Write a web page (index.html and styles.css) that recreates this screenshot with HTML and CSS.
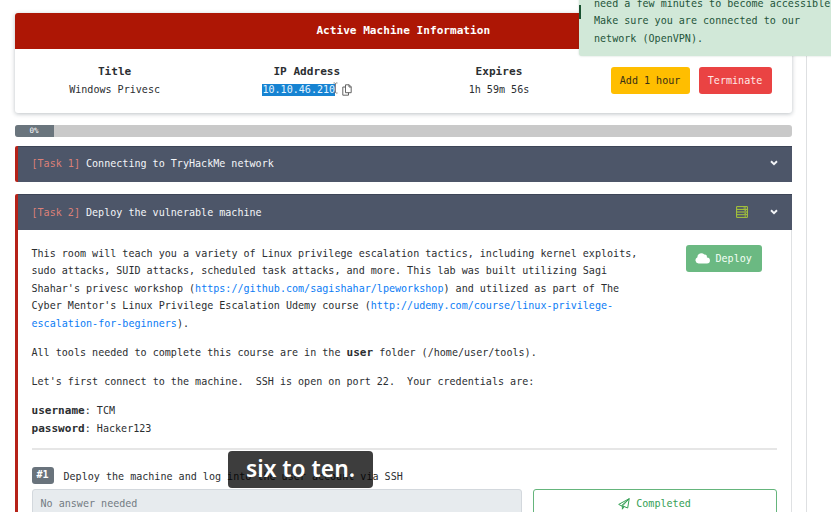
FILE: index.html
```html
<!DOCTYPE html>
<html lang="en">
<head>
<meta charset="utf-8">
<title>Windows Privesc</title>
<link rel="stylesheet" href="styles.css">
</head>
<body>
<div class="screen">
  <main class="room">
    <section class="machine">
      <h2 class="machine-head">Active Machine Information</h2>
      <div class="machine-body">
        <div class="info"><b>Title</b><span>Windows Privesc</span></div>
        <div class="info"><b>IP Address</b><span class="ip-row"><mark>10.10.46.210</mark><svg class="ibeam" viewBox="0 0 5 12"><path d="M.5 1h1.2l.8.7.8-.7h1.2M2.5 1.5v9M.5 11h1.2l.8-.7.8.7h1.2"/></svg><svg class="copy" viewBox="0 0 10 12"><path d="M3.5.8h3.700l2 2v5.900H3.500zM7 .8V3h2.200M3.500 3H.8v8.200h5.700V8.700"/></svg></span></div>
        <div class="info"><b>Expires</b><span>1h 59m 56s</span></div>
        <div class="actions"><button class="btn add">Add 1 hour</button><button class="btn stop">Terminate</button></div>
      </div>
    </section>
    <div class="progress"><div class="bar">0%</div></div>
    <section class="task">
      <header class="task-head"><span class="num">[Task 1]</span><span>Connecting to TryHackMe network</span>
        <svg class="chev" viewBox="0 0 8 6"><path d="M1 1.300 4 4.200 7 1.300"/></svg></header>
    </section>
    <section class="task open">
      <header class="task-head"><span class="num">[Task 2]</span><span>Deploy the vulnerable machine</span>
        <svg class="server" viewBox="0 0 12 12"><path d="M.6.6h10.800v10.800H.6zM.6 3.400h10.800M.6 6h10.800M.6 8.700h10.800M7.500 2h2.500M8.500 4.700H10M8.500 7.300H10M8.500 10H10"/></svg>
        <svg class="chev" viewBox="0 0 8 6"><path d="M1 1.300 4 4.200 7 1.300"/></svg></header>
      <div class="task-body">
        <div class="intro">
          <div class="copytext">
            <p>This room will teach you a variety of Linux privilege escalation tactics, including kernel exploits,<br>sudo attacks, SUID attacks, scheduled task attacks, and more. This lab was built utilizing Sagi<br>Shahar's privesc workshop (<a>https://github.com/sagishahar/lpeworkshop</a>) and utilized as part of The<br>Cyber Mentor's Linux Privilege Escalation Udemy course (<a>http://udemy.com/course/linux-privilege-<br>escalation-for-beginners</a>).</p>
            <p>All tools needed to complete this course are in the <b>user</b> folder (/home/user/tools).</p>
            <p>Let's first connect to the machine.&nbsp; SSH is open on port 22.&nbsp; Your credentials are:</p>
            <p><b>username</b>: TCM<br><b>password</b>: Hacker123</p>
          </div>
          <button class="btn deploy"><svg viewBox="0 0 15 11"><path d="M3.600 10.500a3.300 3.300 0 0 1-1.200-6.300A3.900 3.900 0 0 1 9.300 1.600a2.600 2.600 0 0 1 2.600 2.900 3 3 0 0 1 .1 6z"/></svg>Deploy</button>
        </div>
        <hr>
        <div class="question"><span class="badge">#1</span><span>Deploy the machine and log into the user account via SSH</span></div>
        <div class="answer">
          <div class="field">No answer needed</div>
          <button class="done"><svg viewBox="0 0 12 12"><path d="M11.200.7.7 6.400l2.700 1.400L11.200.7 9.700 10 6 8.500 4.400 11.200V8.100L11.200.7M3.400 7.800l1 .3 1.600.4"/></svg>Completed</button>
        </div>
      </div>
    </section>
  </main>
  <aside class="toast">need a few minutes to become accessible.<br>Make sure you are connected to our<br>network (OpenVPN).</aside>
  <div class="caption">six to ten.</div>
</div>
</body>
</html>
```
FILE: styles.css
```css
* { box-sizing: border-box; }
body { margin: 0; background: #fff; overflow: hidden; }
.screen {
  position: relative;
  width: 831px;
  height: 512px;
  overflow: hidden;
  font: 10.07px/17.45px "DejaVu Sans Mono", monospace;
  color: #2b2e31;
}
button { font: inherit; border: 0; padding: 0; }
svg { fill: none; stroke: currentColor; flex: none; }
.room { width: 807px; height: 560px; padding: 13px 14.500px 0 14.500px; border-right: 1px solid #dee0e2; }

.machine {
  height: 100px;
  margin-left: .5px;
  border-radius: 3px;
  box-shadow: 0 1px 4px rgba(30, 45, 60, .3);
}
.machine-head {
  height: 36px;
  margin: 0;
  border-radius: 3px 3px 0 0;
  background: #ad1605;
  color: #fff;
  font-size: 11.1px;
  line-height: 36px;
  text-align: center;
}
.machine-body { display: flex; padding-top: 14px; }
.info { width: 192.2px; padding-left: 7px; display: flex; flex-direction: column; align-items: center; }
.info b { font-size: 11.1px; line-height: 18px; }
.ip-row { display: flex; align-items: center; height: 17.45px; padding-left: 1px; }
mark { background: #1683d2; color: #e3f4ff; line-height: 12px; }
.ibeam { width: 5px; height: 12px; margin: -3px 0 0 -2px; color: #666; stroke-width: .8; }
.copy { width: 10px; height: 12px; margin-left: 4px; color: #555; stroke-width: .9; }
.actions { display: flex; gap: 9px; padding: 4px 0 0 19px; }
.btn { height: 27px; border-radius: 3px; }
.add { width: 79px; background: #ffbe00; color: #372f16; }
.stop { width: 73px; background: #ea4343; color: #ffe9e7; }

.progress { height: 12px; margin-top: 12px; border-radius: 3px; background: #c9c9c9; overflow: hidden; }
.bar { width: 39px; height: 12px; background: #6a757d; color: #fff; font-size: 7.500px; line-height: 12px; text-align: center; }

.task { margin-top: 8.500px; border-left: 3px solid #b62218; border-radius: 2px; }
.task.open { margin-top: 12.500px; border-right: 1px solid #dfe1e3; }
.task-head {
  display: flex;
  align-items: center;
  height: 36px;
  padding: 0 14px 0 14px;
  border-top: 1px solid #3d4557;
  background: #4d5669;
  color: #f3f5f8;
}
.task:not(.open) .task-head { padding-bottom: 1px; }
.open .task-head { margin-right: -1px; }
.num { color: #dc8078; margin-right: 6px; }
.chev { width: 8px; height: 6px; margin: -2px 0 0 auto; stroke-width: 1.900; }
.server { width: 12px; height: 12px; margin: -2px 0 0 auto; color: #a9c938; }
.server + .chev { margin-left: 22px; }
.task-body { padding: 15px 14px 0; }
.intro { display: flex; justify-content: space-between; height: 203px; }
.copytext p { margin: 0 0 11.700px; white-space: nowrap; }
.copytext a { color: #0b7cf5; }
.copytext b { font-size: 11.05px; line-height: 1; }
.deploy { display: flex; align-items: center; width: 76px; margin-right: 15px; padding-left: 9px; background: #6bb982; color: #f3fff5; }
.deploy svg { width: 15px; height: 11px; margin-right: 6px; fill: #fff; stroke: none; }
hr { height: 2px; margin: 0; border: 0; background: #e6e6e6; }
.question { display: flex; margin-top: 17px; height: 22px; line-height: 20px; }
.badge { width: 22px; height: 17px; margin-right: 10px; border-radius: 3px; background: #69737c; color: #fff; font-weight: bold; line-height: 16px; text-align: center; }
.answer { display: flex; gap: 11px; }
.field { width: 490px; height: 30px; padding-left: 8px; border: 1px solid #d3d8dd; border-radius: 3px; background: #e7ebee; color: #747c83; line-height: 28px; }
.done { flex: 1; display: flex; justify-content: center; align-items: center; height: 30px; border: 1px solid #65b57c; border-radius: 3px; background: #fff; color: #35a055; }
.done svg { width: 12px; height: 12px; margin-right: 6px; }

.toast {
  position: absolute;
  left: 579px;
  top: -31px;
  width: 260px;
  height: 87px;
  padding: 26px 0 0 15px;
  border-radius: 3px;
  background: #d1e8d8;
  color: #24553a;
  white-space: nowrap;
  box-shadow: 0 0 2px rgba(40, 80, 60, .25);
}
.toast::before { content: ""; position: absolute; left: 0; top: 36px; width: 2px; height: 14px; background: #195331; }
.caption {
  position: absolute;
  left: 228px;
  top: 451px;
  width: 145px;
  height: 37px;
  border-radius: 4px;
  background: rgba(0, 0, 0, .76);
  color: #fff;
  font: 600 22.800px/35px "Noto Sans", sans-serif;
  text-align: center;
}
```
